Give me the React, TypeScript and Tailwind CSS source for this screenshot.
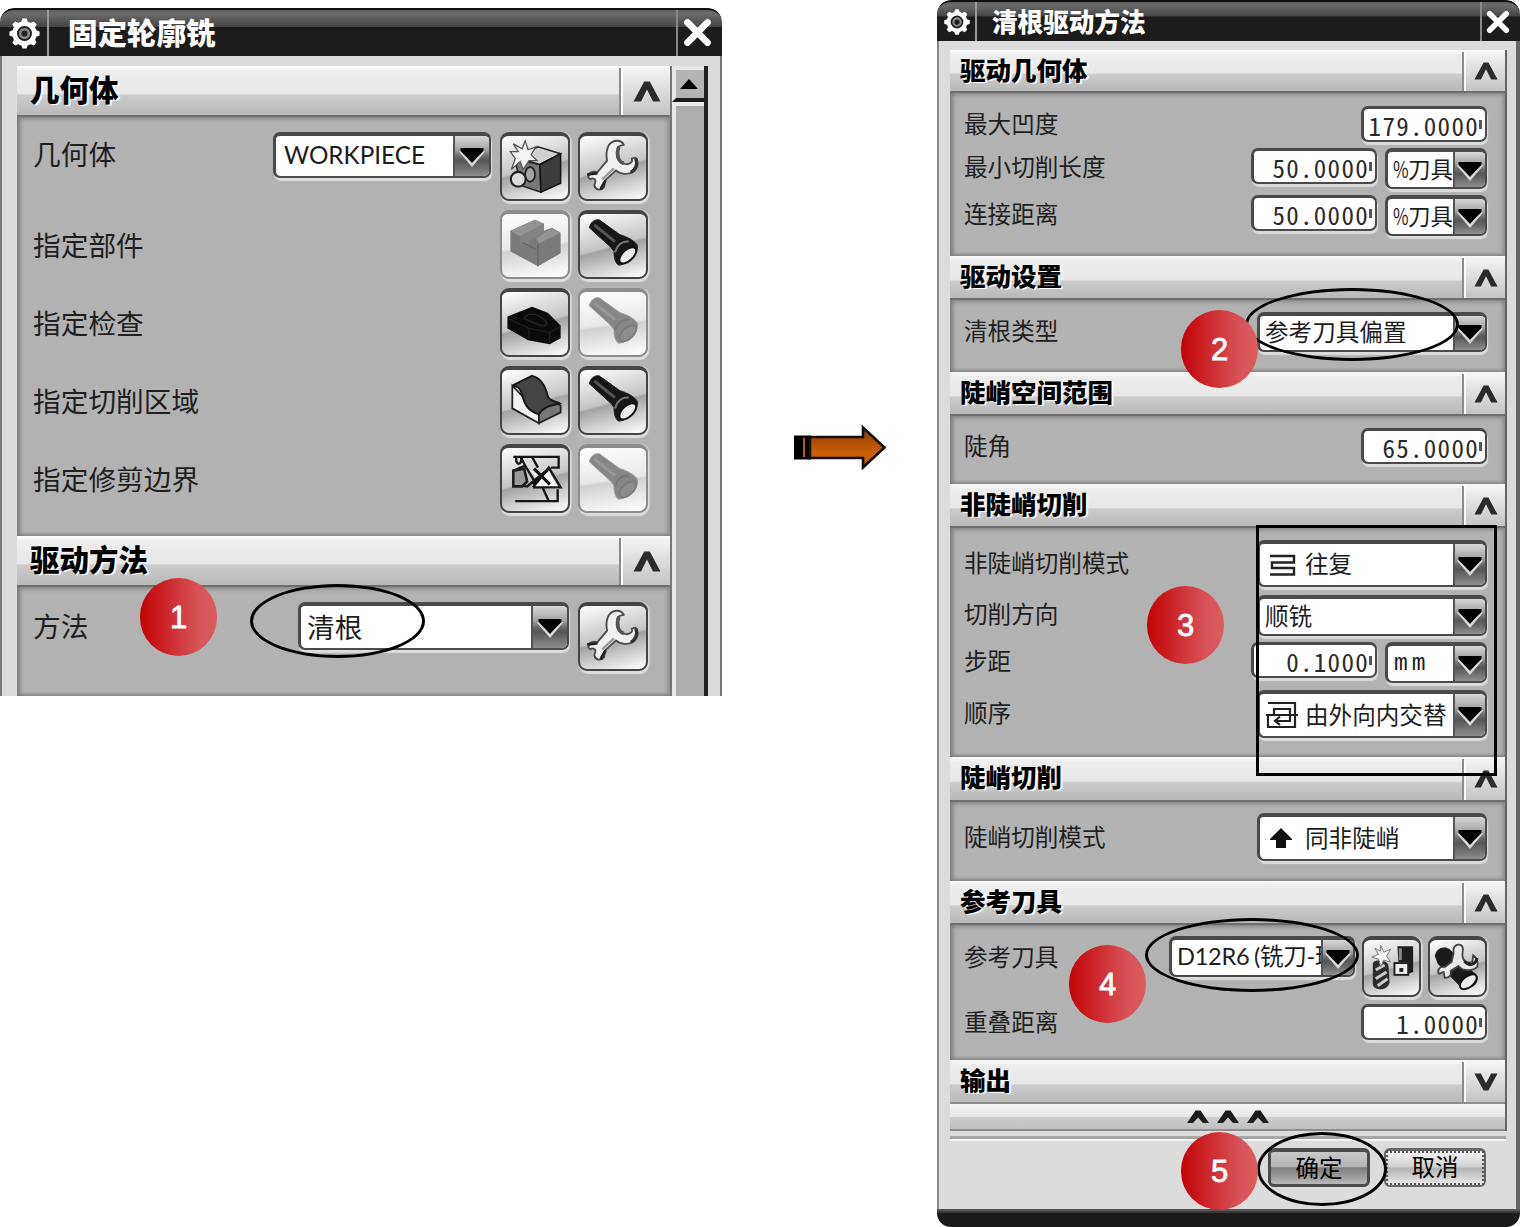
import type { ReactNode } from "react";
import clsx from "clsx";

const ICON_BG =
  "bg-[linear-gradient(165deg,#ffffff_0%,#dedede_28%,#c4c4c4_50%,#a2a2a2_53%,#cfcfcf_75%,#ffffff_100%)]";
const ICON_BG_OFF =
  "bg-[linear-gradient(172deg,#ffffff_0%,#e8e8e8_50%,#d2d2d2_54%,#ffffff_100%)]";

function Gear({ size }: { size: number }) {
  return (
    <svg width={size} height={size} viewBox="0 0 32 32">
      {[0, 45, 90, 135, 180, 225, 270, 315].map((a) => (
        <path
          key={a}
          d="M12.4 6 L14 1.4 H18 L19.6 6 Z"
          fill="#fff"
          transform={`rotate(${a} 16 16)`}
        />
      ))}
      <circle cx="16" cy="16" r="9.6" fill="#1e1e1e" stroke="#fff" strokeWidth="4.6" />
      <circle cx="16" cy="16" r="4.2" fill="#222" stroke="#8a8a8a" strokeWidth="2.4" />
    </svg>
  );
}

function Cross({ size }: { size: number }) {
  return (
    <svg width={size} height={size} viewBox="0 0 26 26">
      <path d="M4 4 L22 22 M22 4 L4 22" stroke="#fff" strokeWidth="6" strokeLinecap="round" />
    </svg>
  );
}

function Chevron({ w, h, down }: { w: number; h: number; down?: boolean }) {
  return (
    <svg width={w} height={h} viewBox="0 0 28 21">
      <path
        d={
          down
            ? "M0.5 0.5 H8 L14 12 L20 0.5 H27.5 L16.8 20.5 H11.2 Z"
            : "M0.5 20.5 L11.2 0.5 H16.8 L27.5 20.5 H20 L14 8.5 L8 20.5 Z"
        }
        fill="#2b2b2b"
      />
    </svg>
  );
}

function Wrench() {
  return (
    <svg className="size-full" viewBox="0 0 70 70">
      <path
        d="M46 13 C43 7 35 8 31 13 C28 18 28 24 29 29 L19 41 C15 39 10 41 10 46 L12 48 C15 46 18 48 17 51 L16 54 C17 59 23 60 26 56 L27 49 L38 39 C42 43 51 44 56 40 C60 36 61 31 58 26 L54 27 C56 31 50 34 46 32 C40 31 37 24 40 16 C41 13 43 14 46 13 Z"
        fill="#f0f0f0"
        stroke="#4a4a4a"
        strokeWidth="1.8"
        strokeLinejoin="round"
      />
      <path d="M41 15 C38 22 40 30 46 32" fill="none" stroke="#555" strokeWidth="3.6" />
      <path d="M36 37 L24 48" fill="none" stroke="#9a9a9a" strokeWidth="2.4" />
      <path d="M58 27 C61 33 57 39 53 41" fill="none" stroke="#333" strokeWidth="3.4" />
      <path d="M10 43 L18 42 M23 57 L27 50" stroke="#222" strokeWidth="3" strokeLinecap="round" />
    </svg>
  );
}

function Flashlight({ off }: { off?: boolean }) {
  return (
    <svg className="size-full" viewBox="0 0 70 70">
      <path
        d="M11 18 C12 13 16 9 21 10 L42 25 C49 27 59 32 60 37 C60 46 50 55 41 56 C37 54 36 48 36 42 L33 38 Z"
        fill={off ? "#868686" : "#161616"}
        stroke={off ? "#9a9a9a" : "#222"}
        strokeWidth="1"
      />
      <path d="M16 15 L37 32" stroke={off ? "#969696" : "#555"} strokeWidth="3" />
      <path d="M37 43 C39 36 44 31 51 32" fill="none" stroke="#777" strokeWidth="2" />
      <ellipse
        cx="50"
        cy="46"
        rx="10.5"
        ry="5.5"
        transform="rotate(-43 50 46)"
        fill={off ? "#8c8c8c" : "#ececec"}
        stroke={off ? "#7c7c7c" : "#111"}
        strokeWidth="2"
      />
    </svg>
  );
}

function NewWorkpiece() {
  return (
    <svg className="size-full" viewBox="0 0 70 70">
      <path d="M15 28 L40 33 L41 61 L20 54 Z" fill="#777" stroke="#222" strokeWidth="1.5" />
      <path d="M17 26 L38 15 L61 22 L40 33 Z" fill="#d0d0d0" stroke="#222" strokeWidth="1.5" />
      <path d="M40 33 L61 22 V52 L41 61 Z" fill="#3c3c3c" stroke="#111" strokeWidth="1.5" />
      <path
        d="M25 9 L28 18 L36 15 L31 23 L37 29 L29 29 L23 38 L20 30 L11 38 L15 27 L10 20 L18 20 L13 12 L22 17 Z"
        fill="#f4f4f4"
        stroke="#555"
        strokeWidth="1.3"
      />
      <path d="M19 40 L30 36 L34 47 L22 55 Z" fill="#8a8a8a" />
      <ellipse cx="30" cy="43" rx="5" ry="7.5" fill="#a4a4a4" stroke="#222" strokeWidth="1.8" />
      <circle cx="18" cy="48" r="7.5" fill="#ddd" stroke="#222" strokeWidth="2.2" />
    </svg>
  );
}

function PartBlock() {
  return (
    <svg className="size-full" viewBox="0 0 70 70">
      <path d="M10 21 L35 10 L44 14 V21 L52 18 L61 23 V44 L38 57 L10 42 Z" fill="#7a7a7a" />
      <path d="M10 21 L35 10 L44 14 L20 27 Z M36 29 L52 18 L61 23 L39 34 Z" fill="#929292" />
      <path d="M20 27 L44 14 V22 L29 31 V38 L20 34 Z" fill="#838383" />
      <path d="M38 34 V57 M22 33 L36 40" stroke="#686868" strokeWidth="1.5" fill="none" />
    </svg>
  );
}

function CheckBody() {
  return (
    <svg className="size-full" viewBox="0 0 70 70">
      <path d="M7 29 L32 19 L48 25 L61 38 V51 L50 57 L28 53 L7 41 Z" fill="#0b0b0b" />
      <path d="M8 31 L29 41 L50 45 L60 40 M29 41 V52 M50 45 V56" stroke="#1f1f1f" strokeWidth="1.5" fill="none" />
      <path d="M24 31 C26 25 36 25 43 31 C51 37 46 40 38 37 Z" fill="none" stroke="#262626" strokeWidth="1.5" />
    </svg>
  );
}

function CutArea() {
  return (
    <svg className="size-full" viewBox="0 0 70 70">
      <path d="M12 20 L12 43 L39 58 V48 Z" fill="#f2f2f2" stroke="#222" strokeWidth="1.8" />
      <path d="M39 48 C42 41 55 36 61 40 V47 L39 58 Z" fill="#777" stroke="#222" strokeWidth="1.8" />
      <path
        d="M12 20 L32 10 C41 12 46 22 48 31 C51 37 55 35 60 38 C52 40 43 41 39 49 C27 45 24 38 22 29 C20 22 17 20 12 20 Z"
        fill="#444"
        stroke="#161616"
        strokeWidth="2"
      />
    </svg>
  );
}

function TrimBoundary() {
  return (
    <svg className="size-full" viewBox="0 0 70 70">
      <path d="M25 23 L38 31 L47 24 L60 46 L33 44 L39 36 Z" fill="#f6f6f6" />
      <path
        d="M13 13 H59 V24 H51 M15 58 H58 V46 M43 45 L49 58 M33 44 H61 L49 24 L33 44 M32 13 L38 24 M13 27 L25 22 L34 37 M14 41 L27 43 L50 24 M16 14 C15 22 22 22 21 14 L25 22"
        fill="none"
        stroke="#161616"
        strokeWidth="2.4"
      />
      <path d="M13 27 L24 25 L27 38 L22 43 H13 Z" fill="#9a9a9a" stroke="#1c1c1c" strokeWidth="2.6" />
      <path d="M34 25 L50 41 M48 26 L33 41" stroke="#111" strokeWidth="3" />
    </svg>
  );
}

function NewTool() {
  return (
    <svg className="size-full" viewBox="0 0 60 61">
      <path d="M36 10 H52 V36 L46 38 V26 H37 Z" fill="#1d1d1d" />
      <path d="M39 12 V24" stroke="#888" strokeWidth="3" />
      <rect x="33" y="27" width="14" height="12" fill="#eee" stroke="#222" strokeWidth="2" />
      <rect x="38" y="32" width="4" height="4" fill="#222" />
      <path d="M11 27 C14 22 26 24 27 30 L28 47 C26 55 13 56 11 49 Z" fill="#2c2c2c" />
      <path d="M14 34 L23 29 M14 43 L25 36 M16 50 L26 43" stroke="#c8c8c8" strokeWidth="3" />
      <path
        d="M19 9 L22 16 L29 13 L25 20 L29 26 L22 24 L19 31 L17 23 L10 21 L17 18 L13 12 L19 15 Z"
        fill="#f8f8f8"
        stroke="#777"
        strokeWidth="1"
      />
    </svg>
  );
}

function EditTool() {
  return (
    <svg className="size-full" viewBox="0 0 60 61">
      <path d="M7 20 C8 12 16 9 22 13 L46 36 C51 38 52 44 48 49 C42 54 34 54 32 50 L10 28 Z" fill="#1b1b1b" />
      <ellipse cx="41" cy="46" rx="10" ry="5.5" transform="rotate(-38 41 46)" fill="#eee" stroke="#111" strokeWidth="2" />
      <path
        d="M34 9 C29 7 25 10 26 17 L24 26 L17 31 C12 30 9 34 11 38 L16 36 L17 42 C23 42 24 38 23 35 L31 30 C36 36 46 35 50 31 C51 27 50 22 46 19 L45 26 C39 28 35 24 35 19 C35 14 37 12 34 9 Z"
        fill="#e8e8e8"
        stroke="#444"
        strokeWidth="1.8"
      />
      <path d="M37 25 C42 31 48 29 50 22" fill="none" stroke="#222" strokeWidth="3" />
    </svg>
  );
}

function IconButton({ children, off, small }: { children: ReactNode; off?: boolean; small?: boolean }) {
  return (
    <div
      className={clsx(
        "relative shrink-0 rounded-[9px] border-[2.5px] border-t-[4px] shadow-[1px_3px_1px_#dedede,2px_0_1px_#cfcfcf]",
        small ? "h-[61px] w-[59px]" : "h-[69px] w-[70px]",
        off ? `border-[#8c8c8c] ${ICON_BG_OFF}` : `border-[#444] ${ICON_BG}`
      )}
    >
      <div className="-mt-1 -ml-0.5 h-[calc(100%+6px)] w-[calc(100%+4px)]">{children}</div>
    </div>
  );
}

function Select({ className, arrow, children }: { className: string; arrow: string; children: ReactNode }) {
  return (
    <div
      className={clsx(
        "flex shrink-0 overflow-hidden rounded-[7px] border-2 border-t-[4px] border-l-[3px] border-[#4a4a4a] bg-white whitespace-nowrap text-[#1d1d1d] shadow-[1px_3px_1px_#dcdcdc]",
        className
      )}
    >
      <div className="flex min-w-0 flex-1 items-center overflow-hidden pb-[3px]">{children}</div>
      <div
        className={clsx(
          "flex shrink-0 items-center justify-center border-l-2 border-[#555] bg-[linear-gradient(#d8d8d8_0%,#a2a2a2_35%,#6c6c6c_50%,#555_62%,#8e8e8e_100%)]",
          arrow
        )}
      >
        <svg width="28" height="22" viewBox="0 0 28 22">
          <path d="M2 6 L14 20 L26 6" fill="none" stroke="#d9d9d9" strokeWidth="2.5" />
          <path d="M2.5 3 H25.5 V6 L14 17.5 L2.5 6 Z" fill="#000" />
        </svg>
      </div>
    </div>
  );
}

function NumberField({ value }: { value: string }) {
  return (
    <div className="flex h-[36px] w-[126px] shrink-0 items-center justify-end rounded-[7px] border-2 border-t-[3px] border-l-[3px] border-[#4a4a4a] bg-white pr-[3px] shadow-[1px_3px_1px_#dcdcdc]">
      <span className="font-['Noto_Sans_CJK_SC',sans-serif] text-[25px] leading-[28px] font-normal tracking-[1.3px] text-[#2a2a2a] [font-feature-settings:'hwid']">
        {value}
      </span>
      <span className="h-[9px] w-[3px] bg-[#555]" />
    </div>
  );
}

function Header({ title, big, down, className }: { title: string; big?: boolean; down?: boolean; className: string }) {
  return (
    <div
      className={clsx(
        "flex shrink-0 bg-[linear-gradient(#fafafa_0%,#ededed_12%,#e8e8e8_56%,#cbcbcb_60%,#b9b9b9_100%)]",
        className
      )}
    >
      <div
        className={clsx(
          "flex-1 font-black text-black [text-shadow:2px_1px_1px_#fff]",
          big ? "pl-[13px] text-[29.5px] leading-[45px]" : "pl-[10px] text-[25.5px] leading-[38px]"
        )}
      >
        {title}
      </div>
      <div
        className={clsx(
          "mt-[2px] flex items-center justify-center border-l-2 border-[#8c8c8c] bg-[linear-gradient(#f4f4f4,#c4c4c4)] pb-[1px] pl-[2px] shadow-[inset_2px_0_0_#fafafa]",
          big ? "w-[51px]" : "w-[43px]"
        )}
      >
        {big ? <Chevron w={28} h={21} /> : <Chevron w={24} h={18} down={down} />}
      </div>
    </div>
  );
}

function Body({ className, children }: { className: string; children: ReactNode }) {
  return (
    <div
      className={clsx(
        "shrink-0 border-t-2 border-[#6e6e6e] bg-[#b2b2b2] shadow-[inset_4px_0_4px_-1px_#7d7d7d,inset_-4px_0_4px_-2px_#8a8a8a,inset_0_3px_4px_-1px_#909090,inset_0_-3px_3px_-1px_#8a8a8a]",
        className
      )}
    >
      {children}
    </div>
  );
}

function Row({ label, className, children }: { label: string; className: string; children: ReactNode }) {
  return (
    <div className={clsx("flex items-start", className)}>
      <span className="flex-1">{label}</span>
      {children}
    </div>
  );
}

function TitleBar({ title, big }: { title: string; big?: boolean }) {
  return (
    <div
      className={clsx(
        "flex shrink-0 items-stretch rounded-t-[14px] border-t-2 border-[#111] bg-[linear-gradient(#5e5e5e_0%,#6c6c6c_8%,#454545_36%,#1c1c1c_38%,#1c1c1c_100%)]",
        big ? "h-[48px]" : "h-[41px]"
      )}
    >
      <div
        className={clsx(
          "flex items-center justify-center border-r-2 border-[#999]",
          big ? "w-[49px] pl-[2px]" : "w-[40px] pl-[1px]"
        )}
      >
        <Gear size={big ? 33 : 28} />
      </div>
      <div
        className={clsx(
          "flex-1 font-black text-white",
          big ? "pl-[19px] text-[29.5px] leading-[42px]" : "pl-[15px] text-[25.6px] leading-[37px]"
        )}
      >
        {title}
      </div>
      <div
        className={clsx(
          "flex items-center justify-center border-l-2 border-[#888]",
          big ? "w-[46px] pr-[5px] pb-[2px]" : "w-[40px] pr-[6px]"
        )}
      >
        <Cross size={big ? 29 : 24} />
      </div>
    </div>
  );
}

function Badge({ n, className }: { n: number; className: string }) {
  return (
    <div
      className={clsx(
        "absolute flex h-[78px] w-[77px] items-center justify-center rounded-full bg-[linear-gradient(to_right,#c20205,#d85256_75%,#dc5c60)] pt-[3px] font-['Liberation_Sans',Arial,sans-serif] text-[31px] text-white [-webkit-text-stroke:0.8px_white]",
        className
      )}
    >
      {n}
    </div>
  );
}

function Ring({ className }: { className: string }) {
  return <div className={clsx("absolute rounded-[50%] border-[3px] border-black", className)} />;
}

function ContourDialog() {
  return (
    <div className="mt-[8px] flex h-[688px] w-[722px] shrink-0 flex-col overflow-hidden rounded-t-[14px] text-[27.7px] text-[#1f1f1f]">
      <TitleBar title="固定轮廓铣" big />
      <div className="flex flex-1 border-x-2 border-[#777] bg-[#dcdcdc] pt-[10px] pl-[15px]">
        <div className="flex w-[653px] flex-col">
          <Header title="几何体" big className="h-[49px]" />
          <Body className="h-[421px] pt-[15px] pr-[22px] pl-[16px]">
            <Row label="几何体" className="h-[78px] leading-[43px]">
              <Select className="mr-[9px] h-[46px] w-[218px]" arrow="w-[36px]">
                <span className="pl-[8px] font-['Lato',sans-serif] text-[24.3px] leading-[38px]">WORKPIECE</span>
              </Select>
              <IconButton>
                <NewWorkpiece />
              </IconButton>
              <div className="w-[8px]" />
              <IconButton>
                <Wrench />
              </IconButton>
            </Row>
            <Row label="指定部件" className="h-[78px] gap-[8px] leading-[69px]">
              <IconButton off>
                <PartBlock />
              </IconButton>
              <IconButton>
                <Flashlight />
              </IconButton>
            </Row>
            <Row label="指定检查" className="h-[78px] gap-[8px] leading-[69px]">
              <IconButton>
                <CheckBody />
              </IconButton>
              <IconButton off>
                <Flashlight off />
              </IconButton>
            </Row>
            <Row label="指定切削区域" className="h-[78px] gap-[8px] leading-[69px]">
              <IconButton>
                <CutArea />
              </IconButton>
              <IconButton>
                <Flashlight />
              </IconButton>
            </Row>
            <Row label="指定修剪边界" className="h-[78px] gap-[8px] leading-[69px]">
              <IconButton>
                <TrimBoundary />
              </IconButton>
              <IconButton off>
                <Flashlight off />
              </IconButton>
            </Row>
          </Body>
          <Header title="驱动方法" big className="h-[49px]" />
          <Body className="h-[111px] pt-[15px] pr-[22px] pl-[16px]">
            <Row label="方法" className="leading-[46px]">
              <Select className="mr-[9px] h-[48px] w-[271px]" arrow="w-[36px]">
                <span className="pl-[6px] leading-[38px]">清根</span>
              </Select>
              <IconButton>
                <Wrench />
              </IconButton>
            </Row>
          </Body>
        </div>
        <div className="flex w-[38px] flex-col border-r-[4px] border-l-2 border-r-[#222] border-l-[#777] bg-[#adadad] shadow-[inset_4px_0_0_#e8e8e8]">
          <div className="flex h-[36px] items-center justify-center border-t-4 border-b-4 border-l-4 border-t-[#e8e8e8] border-b-[#1c1c1c] border-l-[#e8e8e8] bg-[#b4b4b4] pr-[3px]">
            <svg width="18" height="10" viewBox="0 0 18 10">
              <path d="M9 0 L18 10 H0 Z" fill="#000" />
            </svg>
          </div>
          <div className="h-[4px] bg-[#ececec]" />
        </div>
      </div>
    </div>
  );
}

function CaretUp() {
  return (
    <svg width="22" height="13" viewBox="0 0 22 13">
      <path d="M0 13 L8.5 0.5 H13.5 L22 13 H16 L11 7.5 L6 13 Z" fill="#1c1c1c" />
    </svg>
  );
}

function PercentSelect() {
  return (
    <Select className="h-[41px] w-[102px]" arrow="w-[32px]">
      <span className="pl-[5px] text-[22.5px] leading-[34px]">
        <span className="inline-block w-[15px] origin-left scale-x-[0.75]">%</span>刀具
      </span>
    </Select>
  );
}

function FlowcutDialog() {
  return (
    <div className="flex h-[1227px] w-[583px] shrink-0 flex-col overflow-hidden rounded-[14px] text-[23.6px] text-[#1f1f1f]">
      <TitleBar title="清根驱动方法" />
      <div className="flex flex-1 flex-col border-r-[4px] border-l-2 border-r-[#666] border-l-[#888] bg-[#dcdcdc] pt-[9px] pr-[8px] pl-[11px]">
        <div className="flex w-[557px] flex-col border-r-2 border-[#666]">
          <Header title="驱动几何体" className="h-[41px]" />
          <Body className="h-[165px] pt-[13px] pr-[18px] pl-[14px]">
            <Row label="最大凹度" className="h-[42px] leading-[34px]">
              <NumberField value="179.0000" />
            </Row>
            <Row label="最小切削长度" className="h-[47px] gap-[8px] leading-[36px]">
              <NumberField value="50.0000" />
              <PercentSelect />
            </Row>
            <Row label="连接距离" className="gap-[8px] leading-[37px]">
              <NumberField value="50.0000" />
              <PercentSelect />
            </Row>
          </Body>
          <Header title="驱动设置" className="h-[42px]" />
          <Body className="h-[74px] pt-[12px] pr-[18px] pl-[14px]">
            <Row label="清根类型" className="leading-[37px]">
              <Select className="h-[40px] w-[230px]" arrow="w-[32px]">
                <span className="pl-[5px] leading-[31px]">参考刀具偏置</span>
              </Select>
            </Row>
          </Body>
          <Header title="陡峭空间范围" className="h-[42px]" />
          <Body className="h-[70px] pt-[12px] pr-[18px] pl-[14px]">
            <Row label="陡角" className="leading-[35px]">
              <NumberField value="65.0000" />
            </Row>
          </Body>
          <Header title="非陡峭切削" className="h-[42px]" />
          <Body className="h-[231px] pt-[12px] pr-[18px] pl-[14px]">
            <Row label="非陡峭切削模式" className="h-[55px] leading-[45px]">
              <Select className="h-[47px] w-[230px]" arrow="w-[32px]">
                <svg className="mt-[4px] ml-[10px]" width="26" height="22" viewBox="0 0 26 22">
                  <path d="M0 2 H24 V8.5 H2 V14 H24 V20.5 H0" fill="none" stroke="#222" strokeWidth="2.4" />
                </svg>
                <span className="pl-[9px] leading-[34px]">往复</span>
              </Select>
            </Row>
            <Row label="切削方向" className="h-[47px] leading-[37px]">
              <Select className="h-[41px] w-[230px]" arrow="w-[32px]">
                <span className="pl-[5px] leading-[31px]">顺铣</span>
              </Select>
            </Row>
            <Row label="步距" className="h-[48px] gap-[8px] leading-[36px]">
              <NumberField value="0.1000" />
              <Select className="h-[41px] w-[102px]" arrow="w-[32px]">
                <span className="pt-[4px] pl-[6px] font-['Liberation_Mono',monospace] text-[23px] leading-[31px] tracking-[4px]">
                  mm
                </span>
              </Select>
            </Row>
            <Row label="顺序" className="leading-[44px]">
              <Select className="h-[48px] w-[230px]" arrow="w-[32px]">
                <svg className="mt-[3px] ml-[6px] shrink-0" width="32" height="28" viewBox="0 0 32 28">
                  <path
                    d="M2 2 H29 V26 H2 V14 M0 14 H8 V8 H24 V14 M24 14 H32 M24 14 V20 H11 M14 15.5 L9 20 L14 24"
                    fill="none"
                    stroke="#222"
                    strokeWidth="2.2"
                  />
                  <path d="M2 14 H30" stroke="#222" strokeWidth="1.8" />
                </svg>
                <span className="pl-[7px] leading-[34px]">由外向内交替</span>
              </Select>
            </Row>
          </Body>
          <Header title="陡峭切削" className="h-[43px]" />
          <Body className="h-[81px] pt-[11px] pr-[18px] pl-[14px]">
            <Row label="陡峭切削模式" className="leading-[46px]">
              <Select className="h-[48px] w-[230px]" arrow="w-[32px]">
                <svg className="mt-[3px] ml-[10px]" width="22" height="20" viewBox="0 0 22 20">
                  <path d="M11 0 L22 11 V12 H16 V20 H6 V12 H0 V11 Z" fill="#111" />
                </svg>
                <span className="pl-[13px] leading-[34px]">同非陡峭</span>
              </Select>
            </Row>
          </Body>
          <Header title="参考刀具" className="h-[42px]" />
          <Body className="h-[137px] pt-[11px] pr-[18px] pl-[14px]">
            <Row label="参考刀具" className="h-[68px] leading-[40px]">
              <Select className="mr-[7px] h-[41px] w-[186px]" arrow="w-[32px]">
                <span className="pl-[5px] font-['Lato','Noto_Sans_CJK_SC',sans-serif] leading-[31px] tracking-[-0.3px] [word-spacing:-1px]">
                  D12R6 (铣刀-球
                </span>
              </Select>
              <IconButton small>
                <NewTool />
              </IconButton>
              <div className="w-[7px]" />
              <IconButton small>
                <EditTool />
              </IconButton>
            </Row>
            <Row label="重叠距离" className="leading-[34px]">
              <NumberField value="1.0000" />
            </Row>
          </Body>
          <Header title="输出" down className="h-[42px]" />
          <div className="flex h-[29px] items-center justify-center gap-[8px] border-y-2 border-[#8e8e8e] bg-[linear-gradient(#f6f6f6_0%,#e6e6e6_50%,#cccccc_54%,#c0c0c0_100%)]">
            <CaretUp />
            <CaretUp />
            <CaretUp />
          </div>
        </div>
        <div className="mt-[5px] mr-[2px] h-[5px] border-t-3 border-b-2 border-t-[#a6a6a6] border-b-[#f4f4f4]" />
        <div className="mt-[7px] flex gap-[14px] pl-[318px] text-[23.5px] leading-[30px] text-black">
          <div className="h-[39px] w-[102px] rounded-[6px] border-[3px] border-t-[4px] border-[#4c4c4c] bg-[linear-gradient(#c9c9c9_0%,#b5b5b5_45%,#7c7c7c_50%,#b8b8b8_100%)] text-center">
            确定
          </div>
          <div className="h-[39px] w-[102px] rounded-[6px] border-2 border-t-[3px] border-[#666] bg-[linear-gradient(#f4f4f4_0%,#d2d2d2_45%,#b4b4b4_52%,#ececec_100%)] text-center">
            <div className="h-full border-2 border-dotted border-[#555] leading-[27px]">取消</div>
          </div>
        </div>
      </div>
      <div className="h-[18px] shrink-0 border-t-2 border-[#555] bg-[#1a1a1a] shadow-[inset_0_2px_0_#3a3a3a]" />
    </div>
  );
}

export default function App() {
  return (
    <div className="relative flex h-[1227px] w-[1520px] items-start overflow-hidden bg-white font-['Noto_Sans_CJK_SC',sans-serif]">
      <ContourDialog />
      <svg className="mt-[424px] ml-[72px] shrink-0" width="94" height="46" viewBox="0 0 94 46">
        <defs>
          <linearGradient id="arrow" x1="0" y1="0" x2="0" y2="1">
            <stop offset="0" stopColor="#8a3a00" />
            <stop offset="0.65" stopColor="#cc600a" />
            <stop offset="1" stopColor="#b85208" />
          </linearGradient>
        </defs>
        <path d="M0 11.5 H17 V35.5 H0 Z" fill="#000" />
        <path d="M9 14 H11 V33 H9 Z" fill="#b85a10" />
        <path d="M16 13 H69 V3.5 L90.5 23.5 L69 43.5 V34 H16 Z" fill="url(#arrow)" stroke="#111" strokeWidth="2.6" />
      </svg>
      <div className="w-[49px] shrink-0" />
      <FlowcutDialog />

      {/* step annotations */}
      <Ring className="top-[584px] left-[250px] h-[74px] w-[175px]" />
      <Ring className="top-[288px] left-[1245px] h-[73px] w-[214px]" />
      <Ring className="top-[918px] left-[1145px] h-[74px] w-[214px]" />
      <Ring className="top-[1132px] left-[1257px] h-[74px] w-[130px]" />
      <div className="absolute top-[525px] left-[1256px] h-[251px] w-[241px] border-[3px] border-black" />
      <Badge n={1} className="top-[578px] left-[140px]" />
      <Badge n={2} className="top-[310px] left-[1181px]" />
      <Badge n={3} className="top-[586px] left-[1147px]" />
      <Badge n={4} className="top-[945px] left-[1069px]" />
      <Badge n={5} className="top-[1132px] left-[1181px]" />
    </div>
  );
}
